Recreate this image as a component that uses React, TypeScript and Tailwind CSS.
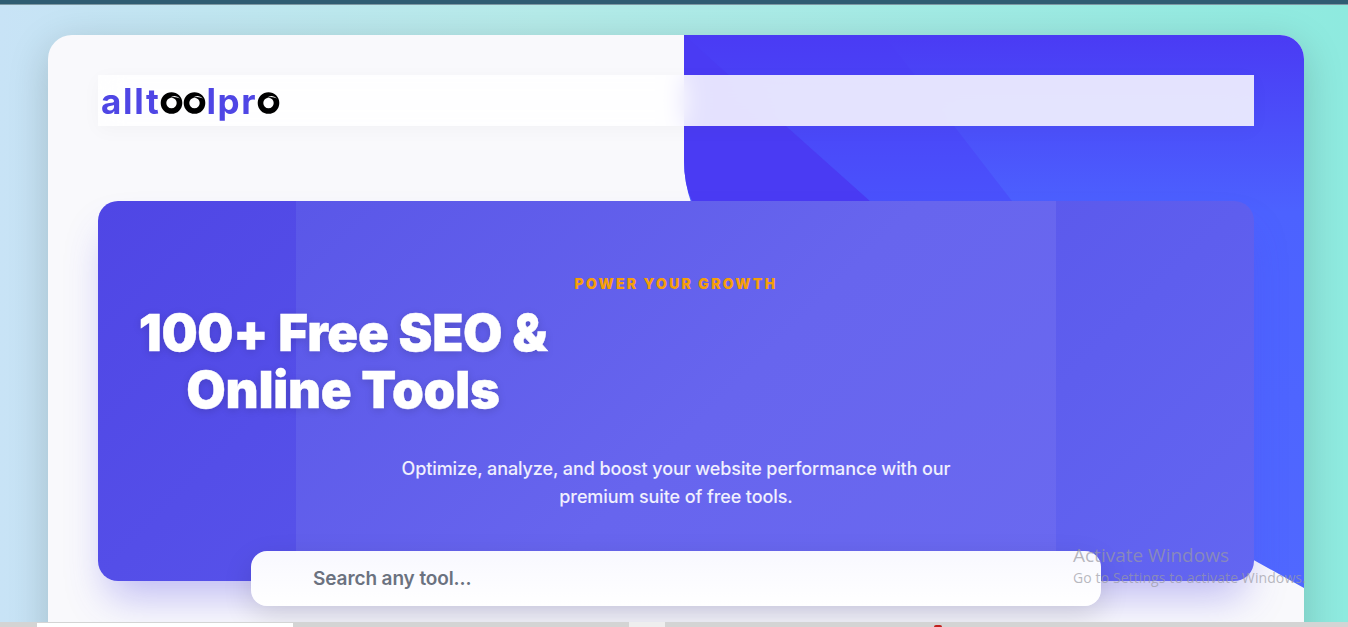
// Landing hero for the alltoolpro page
function LogoO() {
  return (
    <svg viewBox="0 0 22 22" className="h-[22px] w-[23px]" aria-hidden="true">
      <circle cx="11" cy="11" r="8" fill="none" stroke="#000" strokeWidth="5.6" />
      <path d="M9.5 5.6 Q15 1.8 19.5 6.6 Q15 4.2 9.5 5.6Z" fill="#fff" />
    </svg>
  );
}

function Logo() {
  return (
    <div
      className="flex items-end pl-[3px] text-[35px] leading-[40px] font-bold tracking-[1.7px] text-[#4f46e5]"
      aria-label="alltoolpro"
    >
      <span>allt</span>
      <div className="mb-[7px] flex">
        <LogoO />
        <LogoO />
      </div>
      <span>lpr</span>
      <div className="mb-[7px] flex">
        <LogoO />
      </div>
    </div>
  );
}

// Faceted blue shape behind the top right of the card
function Blob() {
  return (
    <svg
      className="absolute top-0 right-0 h-[553px] w-[620px]"
      viewBox="0 0 620 553"
      aria-hidden="true"
    >
      <defs>
        <linearGradient id="blobBase" x1="0" y1="0" x2="0" y2="1">
          <stop offset="0" stopColor="#4a3bf4" />
          <stop offset="0.32" stopColor="#4c62ff" />
          <stop offset="1" stopColor="#5068ff" />
        </linearGradient>
        <linearGradient id="blobFacet" x1="0" y1="0" x2="0" y2="1">
          <stop offset="0" stopColor="#4a3bf4" />
          <stop offset="1" stopColor="#4a52fc" />
        </linearGradient>
      </defs>
      <path d="M0 0H620V553L566 523 200 300 30 210Q0 170 0 125Z" fill="url(#blobBase)" />
      <path d="M0 0 L200 0 L328 166 H186Z" fill="url(#blobFacet)" />
      <path d="M0 0 L186 166 H8 Q0 150 0 125Z" fill="#4a3bf3" />
    </svg>
  );
}

export default function App() {
  return (
    <div className="flex h-screen flex-col overflow-hidden bg-[linear-gradient(90deg,#c8e3f6_0%,#b5ebe9_40%,#8eeadf_100%)] [font-family:Inter,sans-serif]">
      <div className="h-[5px] shrink-0 border-b border-[#7d98a3] bg-[#2f5c72]" />

      <main className="relative min-h-0 flex-1 overflow-hidden pt-[30px] pr-[44px] pl-[48px]">
        <section className="relative h-[700px] overflow-hidden rounded-t-[24px] bg-[#f9f9fc] px-[50px] pt-[40px] shadow-[0_10px_40px_rgba(0,0,0,0.18)]">
          <Blob />

          <header className="relative flex h-[51px] items-center bg-white/85 shadow-[0_4px_20px_rgba(0,0,0,0.03)] backdrop-blur-md">
            <Logo />
          </header>

          <div className="relative mt-[75px] h-[380px] overflow-hidden rounded-[20px] bg-[linear-gradient(135deg,#4f46e5,#6366f1)] shadow-[0_25px_40px_-10px_rgba(79,70,229,0.35)]">
            <div className="absolute inset-y-0 left-[198px] w-[760px] bg-[linear-gradient(135deg,#5a57e8,#6765ee_55%,#6a69f0)]" />
            <div className="relative flex h-full flex-col">
              <p className="mt-[74px] text-center text-[14px] leading-[18px] font-black tracking-[2.3px] text-[#f59e0b]">
                POWER YOUR GROWTH
              </p>
              <h1 className="mt-[11px] ml-[25px] w-[440px] text-center text-[51px] leading-[57px] font-black tracking-[-0.3px] text-white [-webkit-text-stroke:0.4px_white] [text-shadow:0_2px_8px_rgba(0,0,0,0.15)]">
                100+ Free SEO &amp; Online Tools
              </h1>
              <p className="mt-[37px] text-center text-[18px] leading-[28px] font-medium tracking-[-0.1px] text-white/90">
                Optimize, analyze, and boost your website performance with our
                <br />
                premium suite of free tools.
              </p>
            </div>
          </div>

          <div className="relative mx-[153px] -mt-[30px] flex h-[55px] items-center rounded-[16px] bg-[linear-gradient(180deg,#f8f8ff,#ffffff)] pt-[2px] pl-[62px] text-[19px] font-semibold tracking-[-0.1px] text-[#6b7280] shadow-[0_10px_30px_rgba(0,0,0,0.12)]">
            Search any tool...
          </div>
        </section>

        {/* Windows activation watermark */}
        <div className="pointer-events-none absolute top-[537px] left-[1073px] whitespace-nowrap text-[#9a9aa3]/70 [font-family:'Open_Sans',sans-serif]">
          <p className="text-[19px] leading-[26px]">Activate Windows</p>
          <p className="text-[14px] leading-[20px] tracking-[0.1px]">Go to Settings to activate Windows.</p>
        </div>
      </main>

      {/* Bottom strip of the captured window */}
      <div className="flex h-[5px] shrink-0 bg-[#d4d4d4]">
        <div className="mt-[1px] ml-[37px] w-[256px] bg-white" />
        <div className="ml-[336px] w-[36px] bg-[#eeeeee]" />
        <div className="mt-[3px] ml-[269px] h-[4px] w-[8px] rounded-full bg-[#c0201c]" />
      </div>
    </div>
  );
}
